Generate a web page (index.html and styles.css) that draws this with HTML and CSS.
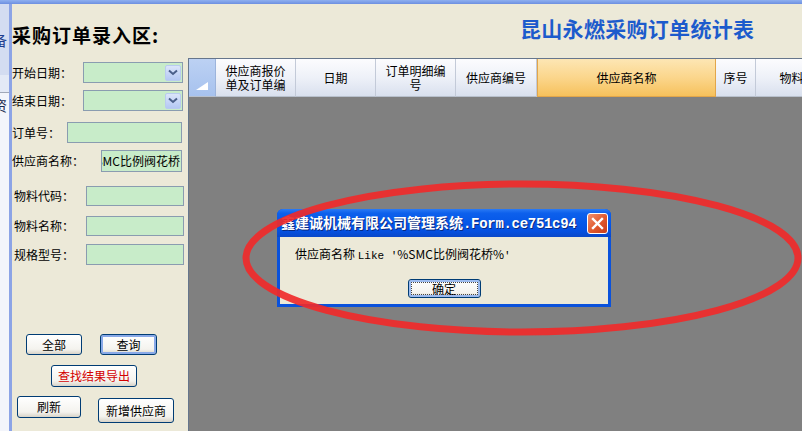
FILE: index.html
```html
<!DOCTYPE html>
<html lang="zh-CN">
<head>
  <meta charset="UTF-8" />
  <title>采购订单统计</title>
  <link rel="stylesheet" href="styles.css">
</head>
<body>

  <div class="topbar"></div>

  <div class="window">
    <!-- tabs of the parent window, mostly hidden -->
    <div class="strip">
      <div class="strip-tab"><span>备</span></div>
      <div class="strip-gap"></div>
      <div class="strip-tab2"><span>资</span></div>
    </div>

    <!-- entry panel -->
    <div class="panel">
      <h1 class="entry-title">采购订单录入区:</h1>

      <div class="row r1">
        <span class="label w71">开始日期：</span>
        <div class="combo"><span class="drop"><svg width="10" height="7" viewBox="0 0 10 7"><path d="M1 1.5 L5 5 L9 1.5" fill="none" stroke="#4a5f8a" stroke-width="2"/></svg></span></div>
      </div>
      <div class="row r2">
        <span class="label w71">结束日期：</span>
        <div class="combo"><span class="drop"><svg width="10" height="7" viewBox="0 0 10 7"><path d="M1 1.5 L5 5 L9 1.5" fill="none" stroke="#4a5f8a" stroke-width="2"/></svg></span></div>
      </div>
      <div class="row r3">
        <span class="label w55">订单号：</span>
        <div class="field f115"></div>
      </div>
      <div class="row r4">
        <span class="label w89">供应商名称：</span>
        <div class="field f81 scrolled"><span>SMC比例阀花桥</span></div>
      </div>
      <div class="row r5">
        <span class="label w74 pad">物料代码：</span>
        <div class="field f98"></div>
      </div>
      <div class="row r6">
        <span class="label w74 pad">物料名称：</span>
        <div class="field f98"></div>
      </div>
      <div class="row r7">
        <span class="label w74 pad">规格型号：</span>
        <div class="field f98"></div>
      </div>

      <div class="btnrow b1">
        <button class="btn btn-all">全部</button>
        <button class="btn btn-query focus">查询</button>
      </div>
      <div class="btnrow b2">
        <button class="btn btn-export">查找结果导出</button>
      </div>
      <div class="btnrow b3">
        <button class="btn btn-refresh">刷新</button>
        <button class="btn btn-add">新增供应商</button>
      </div>
    </div>

    <!-- report area -->
    <div class="report">
      <div class="report-head">
        <h2 class="report-title">昆山永燃采购订单统计表</h2>
      </div>
      <div class="grid">
        <div class="grid-header">
          <div class="cell corner"><svg width="12" height="8" viewBox="0 0 12 8"><polygon points="0,8 12,8 12,0" fill="#ffffff"/></svg></div>
          <div class="cell c80">供应商报价单及订单编</div>
          <div class="cell c80">日期</div>
          <div class="cell c80">订单明细编号</div>
          <div class="cell c81">供应商编号</div>
          <div class="cell c179 sorted">供应商名称</div>
          <div class="cell c40">序号</div>
          <div class="cell c96">物料代码</div>
        </div>
        <div class="grid-body"></div>
      </div>
    </div>
  </div>

  <!-- message box -->
  <div class="dialog">
    <div class="dlg-title">
      <span class="dlg-caption">鑫建诚机械有限公司管理系统<span class="mono">.Form.ce751c94</span></span>
      <span class="dlg-close"><svg width="13" height="13" viewBox="0 0 13 13"><path d="M2 2 L11 11 M11 2 L2 11" stroke="#ffffff" stroke-width="2.4" stroke-linecap="square"/></svg></span>
    </div>
    <div class="dlg-body">
      <p class="dlg-text">供应商名称 <span class="mono-thin">Like '</span>%SMC比例阀花桥%<span class="mono-thin">'</span></p>
      <button class="btn dlg-ok">确定</button>
    </div>
  </div>

  <svg class="mark" width="802" height="431" viewBox="0 0 802 431">
    <ellipse cx="522" cy="258" rx="276" ry="74" fill="none" stroke="#f02a2a" stroke-opacity="0.92" stroke-width="7"/>
  </svg>

</body>
</html>
```

FILE: styles.css
```css
body {
  margin: 0;
  width: 802px;
  height: 431px;
  overflow: hidden;
  position: relative;
  background-color: #ece9d8;
  font-family: "Noto Sans CJK SC", sans-serif;
  font-size: 12px;
  color: #000;
}

.topbar {
  height: 4px;
  background: linear-gradient(#8fb0f0, #6d8fe0);
}

.window {
  display: flex;
  height: 427px;
}

/* left strip */
.strip {
  width: 9px;
  border-right: 3px solid #8ca4e6;
  background-color: #f3f5fb;
  overflow: hidden;
  flex-shrink: 0;
}

.strip-tab {
  height: 71px;
  background-color: #d3dcf1;
  color: #1d3f8f;
  font-size: 14px;
}

.strip-tab span,
.strip-tab2 span {
  display: block;
  margin-left: -7px;
  padding-top: 28px;
  line-height: 16px;
}

.strip-gap {
  height: 17px;
  background-color: #e3e9f6;
  border-bottom: 1px solid #a0a8b8;
}

.strip-tab2 {
  height: 30px;
  font-size: 14px;
  color: #1a2a50;
}

.strip-tab2 span {
  padding-top: 4px;
}

/* entry panel */
.panel {
  width: 176px;
  flex-shrink: 0;
}

.entry-title {
  margin: 19px 0 0 0;
  font-size: 19px;
  line-height: 24px;
  font-weight: bold;
  letter-spacing: 1px;
}

.row {
  display: flex;
  align-items: center;
  height: 21px;
}

.r1 { margin-top: 15px; }
.r2 { margin-top: 7px; }
.r3 { margin-top: 11px; }
.r4 { margin-top: 7px; height: 22px; }
.r5 { margin-top: 14px; height: 20px; }
.r6 { margin-top: 10px; height: 20px; }
.r7 { margin-top: 8px; }

.label {
  flex-shrink: 0;
  line-height: 14px;
  white-space: nowrap;
}

.label.pad { padding-left: 2px; }
.w71 { width: 71px; }
.w55 { width: 55px; }
.w89 { width: 89px; }
.w74 { width: 72px; }

.combo,
.field {
  box-sizing: border-box;
  height: 100%;
  background-color: #c8ecc9;
  border: 1px solid #8a9cb0;
}

.combo {
  width: 100px;
  display: flex;
  justify-content: flex-end;
  align-items: center;
  padding-right: 1px;
}

.drop {
  width: 16px;
  height: 16px;
  box-sizing: border-box;
  border: 1px solid #b9cbef;
  border-radius: 2px;
  background: linear-gradient(#dbe5fa, #b4c8f4);
  display: flex;
  align-items: center;
  justify-content: center;
}

.f115 { width: 115px; }
.f81 { width: 81px; }
.f98 { width: 98px; }

.scrolled {
  display: flex;
  justify-content: flex-end;
  align-items: center;
  overflow: hidden;
  white-space: nowrap;
  padding-right: 1px;
  line-height: 14px;
}

/* buttons */
.btn {
  box-sizing: border-box;
  font-family: "Noto Sans CJK SC", sans-serif;
  font-size: 12px;
  line-height: 14px;
  color: #000;
  padding: 0;
  background: linear-gradient(#ffffff, #f4f3ee 75%, #d8d3c8);
  border: 1px solid #003c74;
  border-radius: 3px;
}

.btn.focus {
  box-shadow: inset 0 0 0 2px #89a9e8;
}

.btnrow {
  display: flex;
  align-items: flex-start;
}

.b1 { margin-top: 69px; }
.b2 { margin-top: 10px; }
.b3 { margin-top: 9px; }

.btn-all { margin-left: 14px; width: 56px; height: 21px; }
.btn-query { margin-left: 18px; width: 57px; height: 21px; }
.btn-export { margin-left: 39px; width: 86px; height: 22px; color: #d40000; }
.btn-refresh { margin-left: 5px; width: 64px; height: 22px; }
.btn-add { margin-left: 17px; margin-top: 2px; width: 76px; height: 25px; }

/* report area */
.report {
  flex: 1;
  min-width: 0;
  display: flex;
  flex-direction: column;
}

.report-head {
  height: 54px;
}

.report-title {
  margin: 12px 0 0 332px;
  font-size: 21px;
  line-height: 24px;
  font-weight: bold;
  color: #1c5bcc;
  letter-spacing: 0.3px;
  white-space: nowrap;
}

.grid {
  flex: 1;
  border-top: 1px solid #66768c;
  border-left: 1px solid #66768c;
  display: flex;
  flex-direction: column;
  overflow: hidden;
}

.grid-header {
  display: flex;
  height: 38px;
  flex-shrink: 0;
}

.cell {
  box-sizing: border-box;
  flex-shrink: 0;
  height: 38px;
  padding: 0 8px;
  display: flex;
  align-items: center;
  justify-content: center;
  text-align: center;
  line-height: 14px;
  background: linear-gradient(#fcfcfe, #eef1f8 50%, #d9e0ee);
  border-right: 1px solid #c3cad8;
  border-bottom: 1px solid #b8c0cc;
}

.corner {
  width: 27px;
  padding: 0 0 6px 0;
  align-items: flex-end;
  background: linear-gradient(#bcd1f3, #a7c2ee);
  border-right: 1px solid #9cb4dc;
}

.c80 { width: 80px; }
.c81 { width: 81px; }
.c179 { width: 179px; }
.c40 { width: 40px; padding: 0; }
.c96 { width: 96px; padding: 0; }

.sorted {
  background: linear-gradient(#fde6b4, #fbd68c 50%, #f6c15c);
  border-left: 1px solid #e2a64a;
  border-right: 1px solid #e2a64a;
  border-bottom-color: #e2a64a;
}

.grid-body {
  flex: 1;
  background-color: #808080;
}

/* message box */
.dialog {
  position: absolute;
  left: 277px;
  top: 209px;
  width: 334px;
  height: 98px;
  box-sizing: border-box;
  background-color: #0a52dc;
  border-radius: 6px 6px 0 0;
  display: flex;
  flex-direction: column;
}

.dlg-title {
  height: 28px;
  flex-shrink: 0;
  display: flex;
  align-items: center;
  padding: 0 3px 0 4px;
  border-radius: 6px 6px 0 0;
  background: linear-gradient(#2a7af4 0%, #0d60ec 15%, #0557e8 50%, #0550e0 80%, #0a48c8 100%);
}

.dlg-caption {
  flex: 1;
  min-width: 0;
  overflow: hidden;
  white-space: nowrap;
  color: #ffffff;
  font-weight: bold;
  font-size: 14px;
  line-height: 16px;
  text-shadow: 1px 1px 0 #0a2a80;
}

.mono {
  font-family: "Liberation Mono", monospace;
  font-size: 14px;
  letter-spacing: -0.3px;
}

.dlg-close {
  width: 21px;
  height: 21px;
  box-sizing: border-box;
  border: 1px solid #ffffff;
  border-radius: 3px;
  background: linear-gradient(135deg, #f09070, #e0582c 55%, #c83c1c);
  display: flex;
  align-items: center;
  justify-content: center;
}

.dlg-body {
  flex: 1;
  margin: 0 3px 3px 3px;
  background-color: #ece9d8;
  display: flex;
  flex-direction: column;
  align-items: center;
}

.dlg-text {
  align-self: flex-start;
  margin: 10px 0 0 15px;
  line-height: 14px;
  white-space: nowrap;
}

.mono-thin {
  font-family: "Liberation Mono", monospace;
  font-size: 11px;
}

.dlg-ok {
  margin-top: 16px;
  width: 73px;
  height: 19px;
  box-shadow: inset 0 0 0 2px #9cbbef;
  outline: 1px dotted #444;
  outline-offset: -4px;
  line-height: 12px;
}

.mark {
  position: absolute;
  left: 0;
  top: 0;
  pointer-events: none;
}
```
